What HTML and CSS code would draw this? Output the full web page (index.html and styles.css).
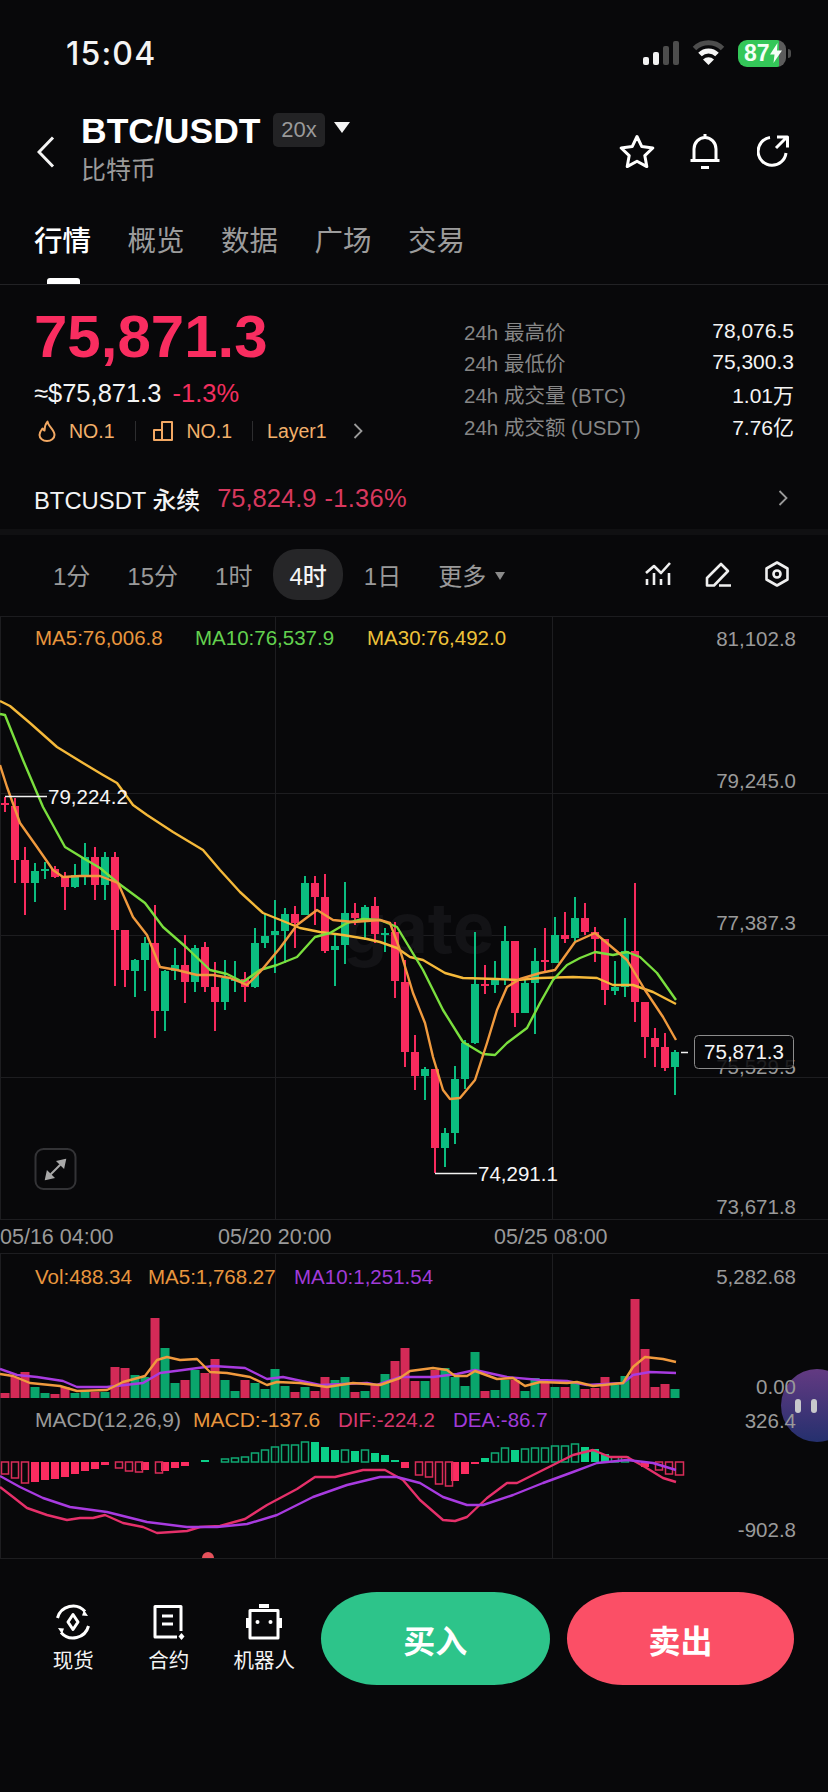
FILE: index.html
```html
<!DOCTYPE html>
<html lang="zh-CN">
<head>
<meta charset="utf-8">
<title>BTC/USDT</title>
<link rel="stylesheet" href="styles.css">
</head>
<body>
<main class="screen">
  <header class="status">
    <span class="clock">15:04</span>
    <div class="status-icons">
      <svg class="signal" width="37" height="24" viewBox="0 0 37 24"><rect class="on" x="0" y="16" width="6" height="8" rx="2"/><rect class="on" x="10" y="11" width="6" height="13" rx="2"/><rect class="off" x="20" y="5" width="6" height="19" rx="2"/><rect class="off" x="30" y="0" width="6" height="24" rx="2"/></svg>
      <svg class="wifi" width="33" height="26" viewBox="0 0 33 26"><path class="wifi-off" d="M2.5 8.500a20 20 0 0 1 28 0"/><path class="wifi-on" d="M8 14.500a12 12 0 0 1 17 0"/><path class="wifi-dot" d="M16.500 25l-5.500-5.500a8 8 0 0 1 11 0z"/></svg>
      <div class="battery"><span class="battery-level">87</span><svg class="bolt" width="12" height="20" viewBox="0 0 12 20"><path d="M7.500 0L0 11.500h4.500L3.500 20 12 7.500H7z"/></svg></div>
      <span class="battery-cap"></span>
    </div>
  </header>

  <section class="title-bar">
    <svg class="back" width="18" height="32" viewBox="0 0 18 32"><path d="M16 1.500L2 16l14 14.500"/></svg>
    <div class="title-main">
      <div class="title-line">
        <h1 class="pair">BTC/USDT</h1>
        <span class="leverage">20x</span>
        <span class="caret"></span>
      </div>
      <p class="coin-name">比特币</p>
    </div>
    <div class="title-actions">
      <svg width="36" height="34" viewBox="0 0 36 34"><path class="stroke-icon" d="M18 2.500l4.800 10.100 11 1.400-8 7.600 2 11-9.800-5.400-9.800 5.400 2-11-8-7.600 11-1.400z"/></svg>
      <svg width="32" height="37" viewBox="0 0 32 37"><path class="stroke-icon" d="M5 27.500V16a11 11.500 0 0 1 22 0v11.500M1.500 27.500h29M16 1v3.500M12 34.500h8"/></svg>
      <svg class="share-icon" width="32" height="32" viewBox="0 0 32 32"><path class="stroke-icon" d="M13 2.500A14 14 0 1 0 29 18M19 13L30 2M20 2h10.500v10.500"/></svg>
    </div>
  </section>

  <nav class="tabs">
    <a class="tab tab-active">行情</a>
    <a class="tab">概览</a>
    <a class="tab">数据</a>
    <a class="tab">广场</a>
    <a class="tab">交易</a>
  </nav>

  <section class="quote">
    <div class="quote-left">
      <div class="last-price">75,871.3</div>
      <div class="fiat-line"><span class="fiat">≈$75,871.3</span><span class="change">-1.3%</span></div>
      <div class="rank-line">
        <svg width="18" height="22" viewBox="0 0 18 22"><path class="rank-icon" d="M9.500 1.500C10 6.500 16.500 9.500 16.500 15a7.500 6 0 0 1-15 0c0-3 1.500-4.500 3-6.500.5 1 1 1.500 2 2C6.500 8 7.500 4 9.500 1.500z"/></svg>
        <span class="rank">NO.1</span>
        <span class="rank-sep"></span>
        <svg width="21" height="20" viewBox="0 0 21 20"><path class="rank-icon" d="M1 9h8v10H1zM9 19V1h10v18z"/></svg>
        <span class="rank">NO.1</span>
        <span class="rank-sep"></span>
        <span class="rank">Layer1</span>
        <svg class="rank-more" width="10" height="16" viewBox="0 0 10 16"><path d="M1.500 1l7 7-7 7"/></svg>
      </div>
    </div>
    <dl class="stats">
      <div class="stat"><dt>24h 最高价</dt><dd>78,076.5</dd></div>
      <div class="stat"><dt>24h 最低价</dt><dd>75,300.3</dd></div>
      <div class="stat"><dt>24h 成交量 (BTC)</dt><dd>1.01万</dd></div>
      <div class="stat"><dt>24h 成交额 (USDT)</dt><dd>7.76亿</dd></div>
    </dl>
  </section>

  <section class="perp">
    <span class="perp-name">BTCUSDT 永续</span>
    <span class="perp-price">75,824.9</span>
    <span class="perp-change">-1.36%</span>
    <svg class="perp-more" width="10" height="16" viewBox="0 0 10 16"><path d="M1.500 1l7 7-7 7"/></svg>
  </section>

  <section class="intervals">
    <span class="interval">1分</span>
    <span class="interval">15分</span>
    <span class="interval">1时</span>
    <span class="interval interval-active">4时</span>
    <span class="interval">1日</span>
    <span class="interval">更多<i class="more-caret"></i></span>
    <div class="chart-tools">
      <svg width="26" height="24" viewBox="0 0 26 24"><path class="tool-icon" d="M1 11l8-7 7 7 9-10M2 17v6M9 11v12M16 17v6M24 11v12"/></svg>
      <svg width="26" height="25" viewBox="0 0 26 25"><path class="tool-icon" d="M2 23.500V16L16 2l7 7-14 14.500zM14 23.500h12"/></svg>
      <svg width="24" height="26" viewBox="0 0 24 26"><path class="tool-icon" d="M12 1.500l10.500 6v11L12 24.500l-10.500-6v-11z"/><circle class="tool-icon" cx="12" cy="13" r="3.500"/></svg>
    </div>
  </section>

  <div class="float-widget"><span class="float-bar"></span><span class="float-bar"></span></div>

  <svg class="chart" width="828" height="942" viewBox="0 617 828 942">
    <path class="grid" d="M.5 617V1219M275.500 617V1219M552.500 617V1219M.5 1253V1558M275.500 1253V1558M552.500 1253V1558M0 793.500H828M0 935.500H828M0 1077.500H828M0 1219.500H828M0 1253.500H828M0 1558.500H828"/>
    <text class="watermark" x="343" y="953">gate</text>

    <text class="label ma5" x="35" y="645">MA5:76,006.8</text>
    <text class="label ma10" x="195" y="645">MA10:76,537.9</text>
    <text class="label ma30" x="367" y="645">MA30:76,492.0</text>

    <path class="wick green" d="M35 863V902M45 862V879M75 864V888M85 843V885M105 852V900M135 959V997M145 937V991M165 970V1031M175 948V980M195 945V992M225 960V1010M235 961V992M255 928V988M265 914V948M275 900V973M285 908V963M305 876V915M335 935V986M345 882V964M365 905V940M385 928V952M425 1067V1100M445 1128V1167M455 1066V1144M465 1040V1089M475 932V1044M495 961V993M505 926V985M525 980V1013M535 948V1034M555 917V963M575 897V943M615 961V995M625 918V997M675 1050V1095"/>
    <path class="wick red" d="M5 797V812M15 798V883M25 847V915M55 866V878M65 872V910M95 847V900M115 852V986M125 930V987M155 905V1038M185 935V1003M205 942V992M215 962V1031M245 972V1002M295 906V948M315 876V925M325 874V953M355 903V925M375 897V943M395 922V998M405 960V1067M415 1035V1090M435 1069V1173M485 965V994M515 941V1027M545 928V973M565 912V943M585 903V935M595 927V962M605 939V1005M635 883V1022M645 1002V1058M655 1028V1067M665 1033V1071"/>
    <path class="body green" d="M35 871V883M45 869V871M75 875V887M85 857V875M105 857V885M135 960V971M145 943V960M165 971V1011M175 965V971M195 948V982M225 978V1002M235 979V981M255 943V987M265 936V943M275 931V935M285 914V931M305 883V915M335 946V950M345 913V945M365 907V919M385 933V935M425 1069V1076M445 1133V1148M455 1079V1133M465 1043V1079M475 984V1043M495 980V985M505 941V980M525 983V1013M535 961V983M555 935V963M575 918V938M615 987V991M625 951V987M675 1052V1067"/>
    <path class="body red" d="M5 803V805M15 806V860M25 860V883M55 869V877M65 877V887M95 857V885M115 857V930M125 930V970M155 943V1011M185 965V982M205 947V987M215 987V1002M245 979V987M295 914V923M315 883V897M325 897V951M355 913V918M375 906V934M395 932V981M405 982V1052M415 1052V1076M435 1069V1148M485 984V986M515 941V1013M545 960V962M565 935V939M585 918V932M595 932V939M605 939V990M635 951V1002M645 1002V1037M655 1038V1047M665 1047V1068"/>

    <polyline class="line line-ma30" points="0,701 10,706 30,723 57,747 83,763 103,775 117,783 133,805 147,815 173,832 203,850 220,870 240,892 263,913 283,921 300,928 320,932 343,935 367,939 380,942 397,948 410,957 423,960 445,973 463,978 497,979 517,980 540,978 573,977 597,978 613,985 633,985 653,992 676,1004"/>
    <polyline class="line line-ma10" points="0,714 5,715 23,760 43,807 65,847 83,858 100,868 118,883 145,903 163,927 187,948 210,970 227,974 243,982 260,970 277,965 297,957 315,937 330,933 347,923 363,919 380,920 397,927 423,970 443,1010 463,1042 483,1054 495,1055 507,1043 527,1028 540,1003 553,980 567,965 580,958 595,952 613,955 627,952 640,957 657,973 676,1000"/>
    <polyline class="line line-ma5" points="0,765 7,787 20,823 37,847 53,870 63,877 80,876 100,876 118,883 133,917 147,935 160,967 177,970 197,975 213,975 230,978 247,985 260,972 280,948 297,925 317,910 333,920 353,922 380,920 390,923 400,950 413,993 425,1023 433,1057 443,1090 450,1099 460,1098 475,1080 487,1043 497,1010 507,987 520,979 540,973 555,970 575,942 595,933 607,943 627,960 645,990 663,1017 676,1040"/>

    <path class="marker" d="M5 796.500H47M435 1173.500H477M681 1052.500H688"/>
    <text class="label extreme" x="48" y="804">79,224.2</text>
    <text class="label extreme" x="478" y="1181">74,291.1</text>

    <text class="label axis axis-end" x="796" y="646">81,102.8</text>
    <text class="label axis axis-end" x="796" y="788">79,245.0</text>
    <text class="label axis axis-end" x="796" y="930">77,387.3</text>
    <text class="label axis axis-end" x="796" y="1074">75,529.5</text>
    <text class="label axis axis-end" x="796" y="1214">73,671.8</text>

    <rect class="price-box" x="694.500" y="1035.500" width="99" height="33" rx="4"/>
    <text class="label extreme axis-mid" x="744" y="1059">75,871.3</text>

    <rect class="expand-box" x="35.500" y="1149" width="40" height="40" rx="8"/>
    <path class="expand-arrow" d="M65 1160l-7 1.500 5.500 5.500zM46 1179l7-1.500-5.500-5.500zM60 1165l-9 9"/>

    <text class="label axis time" x="0" y="1244">05/16 04:00</text>
    <text class="label axis time" x="218" y="1244">05/20 20:00</text>
    <text class="label axis time" x="494" y="1244">05/25 08:00</text>

    <text class="label vol-ma5" x="35" y="1284">Vol:488.34</text>
    <text class="label vol-ma5" x="148" y="1284">MA5:1,768.27</text>
    <text class="label vol-ma10" x="294" y="1284">MA10:1,251.54</text>
    <text class="label axis axis-end" x="796" y="1284">5,282.68</text>

    <path class="vol vol-red" d="M5 1398V1393M15 1398V1377M25 1398V1372M55 1398V1394M65 1398V1387M95 1398V1392M115 1398V1367M125 1398V1368M155 1398V1318M185 1398V1380M205 1398V1373M215 1398V1359M245 1398V1380M295 1398V1392M315 1398V1391M325 1398V1377M355 1398V1392M375 1398V1385M395 1398V1361M405 1398V1348M415 1398V1381M435 1398V1370M485 1398V1391M515 1398V1380M545 1398V1383M565 1398V1387M585 1398V1389M595 1398V1388M605 1398V1377M635 1398V1299M645 1398V1349M655 1398V1387M665 1398V1384"/>
    <path class="vol vol-green" d="M35 1398V1387M45 1398V1393M75 1398V1393M85 1398V1390M105 1398V1392M135 1398V1375M145 1398V1377M165 1398V1348M175 1398V1383M195 1398V1370M225 1398V1380M235 1398V1391M255 1398V1383M265 1398V1389M275 1398V1369M285 1398V1386M305 1398V1387M335 1398V1380M345 1398V1377M365 1398V1391M385 1398V1374M425 1398V1381M445 1398V1368M455 1398V1377M465 1398V1386M475 1398V1352M495 1398V1390M505 1398V1380M525 1398V1391M535 1398V1378M555 1398V1387M575 1398V1383M615 1398V1385M625 1398V1376M675 1398V1389"/>
    <polyline class="line line-vol10" points="0,1369 17,1375 37,1377 63,1381 77,1387 107,1387 143,1383 160,1373 183,1370 213,1366 245,1368 267,1379 283,1377 320,1385 367,1383 377,1385 400,1377 433,1377 457,1374 475,1370 507,1377 540,1380 567,1381 587,1385 623,1383 633,1375 650,1372 676,1373"/>
    <polyline class="line line-vol5" points="0,1374 13,1376 30,1383 60,1386 77,1391 107,1390 123,1382 145,1376 157,1360 167,1357 180,1360 197,1359 210,1372 227,1373 250,1377 267,1385 277,1382 300,1383 327,1387 353,1383 380,1385 400,1378 410,1371 433,1368 447,1370 455,1376 467,1376 475,1371 497,1379 513,1378 525,1386 540,1382 567,1383 577,1382 593,1386 623,1383 633,1367 645,1357 663,1359 676,1362"/>

    <text class="label axis axis-end" x="796" y="1394">0.00</text>
    <text class="label axis macd-label" x="35" y="1427">MACD(12,26,9)</text>
    <text class="label vol-ma5 macd-label" x="193" y="1427">MACD:-137.6</text>
    <text class="label dif" x="338" y="1427">DIF:-224.2</text>
    <text class="label vol-ma10" x="453" y="1427">DEA:-86.7</text>
    <text class="label axis axis-end" x="796" y="1428">326.4</text>
    <text class="label axis axis-end" x="796" y="1537">-902.8</text>

    <path class="macd macd-red" d="M35 1462V1482M45 1462V1480M55 1462V1479M65 1462V1477M75 1462V1474M85 1462V1471M95 1462V1469M105 1462V1465M145 1462V1470M165 1462V1471M175 1462V1468M185 1462V1466M405 1462V1468M455 1462V1481M465 1462V1474M475 1462V1464M645 1462V1467"/>
    <path class="macd macd-green" d="M205 1462V1460M315 1462V1442M325 1462V1447M335 1462V1450M355 1462V1451M375 1462V1453M385 1462V1455M395 1462V1460M485 1462V1458M515 1462V1450M585 1462V1447M595 1462V1449M605 1462V1454"/>
    <path class="hollow hollow-red" d="M1.500 1462h7v12h-7zM11.500 1462h7v16h-7zM21.500 1462h7v21h-7zM115.500 1462h7v6h-7zM125.500 1462h7v9h-7zM135.500 1462h7v10h-7zM155.500 1462h7v11h-7zM415.500 1462h7v13h-7zM425.500 1462h7v15h-7zM435.500 1462h7v22h-7zM445.500 1462h7v24h-7zM655.500 1462h7v8h-7zM665.500 1462h7v12h-7zM675.500 1462h8v13h-8z"/>
    <path class="hollow hollow-green" d="M221.500 1462h7v-3h-7zM231.500 1462h7v-4h-7zM241.500 1462h7v-5h-7zM251.500 1462h7v-9h-7zM261.500 1462h7v-12h-7zM271.500 1462h7v-15h-7zM281.500 1462h7v-17h-7zM291.500 1462h7v-17h-7zM301.500 1462h7v-20h-7zM341.500 1462h7v-12h-7zM361.500 1462h7v-12h-7zM491.500 1462h7v-9h-7zM501.500 1462h7v-14h-7zM521.500 1462h7v-13h-7zM531.500 1462h7v-14h-7zM541.500 1462h7v-14h-7zM551.500 1462h7v-16h-7zM561.500 1462h7v-16h-7zM571.500 1462h7v-18h-7zM611.500 1462h7v-5h-7zM621.500 1462h7v-5h-7z"/>
    <polyline class="line line-dif" points="0,1487 13,1497 27,1508 47,1515 67,1520 80,1518 93,1518 105,1515 123,1523 143,1527 157,1533 187,1531 200,1527 220,1526 245,1519 267,1505 297,1489 315,1477 335,1477 363,1470 385,1470 403,1480 420,1500 443,1520 455,1521 467,1517 487,1498 507,1483 517,1483 543,1470 573,1455 593,1450 610,1457 627,1457 645,1467 663,1478 676,1482"/>
    <polyline class="line line-dea" points="0,1476 20,1487 43,1498 70,1507 107,1512 147,1522 187,1527 217,1527 247,1524 277,1515 313,1497 347,1485 380,1477 397,1477 420,1483 443,1497 467,1505 483,1505 513,1495 543,1483 573,1472 597,1463 627,1460 653,1463 676,1470"/>
    <path class="dot" d="M202 1558a6 6 0 0 1 12 0z"/>
  </svg>

  <footer class="trade-bar">
    <div class="tool">
      <svg width="36" height="36" viewBox="0 0 36 36"><path class="foot-icon" d="M2.500 14A16 16 0 0 1 30 7.500M33.500 22A16 16 0 0 1 6 28.500"/><path class="foot-icon" d="M18 10.500l5 7.500-5 7.500-5-7.500z"/><path class="foot-fill" d="M29 6l4 6-6-.5zM7 30l-4-6 6 .5z"/></svg>
      <span class="tool-label">现货</span>
    </div>
    <div class="tool">
      <svg width="32" height="36" viewBox="0 0 32 36"><path class="foot-icon" d="M28 27V2.500H2V33h22M9 12h11M9 20h11"/><path class="foot-fill" d="M28.500 29l3 3.500-3 3.500-3-3.500z"/></svg>
      <span class="tool-label">合约</span>
    </div>
    <div class="tool">
      <svg width="38" height="36" viewBox="0 0 38 36"><path class="foot-icon" d="M5 6.500h28v27.500H5z"/><path class="foot-fill" d="M14 0h10v4H14zM1 14h3v10H1zM34 14h3v10h-3z"/><circle class="foot-fill" cx="12.500" cy="18" r="2"/><circle class="foot-fill" cx="25.500" cy="18" r="2"/></svg>
      <span class="tool-label">机器人</span>
    </div>
    <button class="trade-btn buy">买入</button>
    <button class="trade-btn sell">卖出</button>
  </footer>
</main>
</body>
</html>
```

FILE: styles.css
```css
* { box-sizing: border-box; }
html, body { margin: 0; padding: 0; background: #08080a; }
body { font-family: "Liberation Sans", "Noto Sans CJK SC", sans-serif; color: #fff; }
h1, p, dl, dd { margin: 0; }

.screen { position: relative; width: 828px; height: 1792px; overflow: hidden; background: #08080a; }

/* status bar */
.status { height: 106px; display: flex; align-items: center; justify-content: space-between; padding: 0 37px 0 66px; }
.clock { font-family: Inter, "Liberation Sans", sans-serif; font-size: 32px; font-weight: 500; letter-spacing: 1.200px; color: #f4f4f4; }
.status-icons { display: flex; align-items: center; }
.signal .on { fill: #f2f2f2; }
.signal .off { fill: #4d4d4d; }
.wifi { margin-left: 12px; }
.wifi path { fill: none; stroke-width: 5; }
.wifi .wifi-off { stroke: #4d4d4d; }
.wifi .wifi-on { stroke: #f5f5f5; }
.wifi .wifi-dot { fill: #f5f5f5; stroke: none; }
.battery { margin-left: 13px; width: 48px; height: 27px; border-radius: 9px; display: flex; align-items: center; padding-left: 6px; background: linear-gradient(90deg, #34c759 0, #34c759 41px, #5c5c5c 41px); }
.battery-level { font-size: 23px; font-weight: 700; line-height: 1; color: #f4fff6; }
.bolt { fill: #f4fff6; }
.battery-cap { width: 3px; height: 9px; margin-left: 2px; border-radius: 0 3px 3px 0; background: #4d4d4d; }

/* title */
.title-bar { height: 112px; display: flex; padding-left: 37px; padding-right: 39px; }
.back { margin-top: 30px; }
.back path { fill: none; stroke: #f4f4f4; stroke-width: 3; }
.title-main { margin-left: 26px; padding-top: 7px; }
.title-line { display: flex; align-items: center; height: 34px; }
.pair { font-size: 35.500px; font-weight: 700; line-height: 34px; padding-top: 2px; }
.leverage { margin-left: 12.500px; width: 52px; height: 34px; display: flex; align-items: center; justify-content: center; border-radius: 5px; background: #232325; color: #9a9a9a; font-size: 22px; }
.caret { margin-left: 9px; margin-bottom: 5px; border-left: 8px solid transparent; border-right: 8px solid transparent; border-top: 11px solid #f4f4f4; }
.coin-name { margin-top: 9px; font-size: 25px; line-height: 28px; color: #9a9a9a; }
.title-actions { margin-left: auto; display: flex; align-items: center; gap: 33.500px; height: 72px; margin-top: 9px; }
.share-icon { margin-left: 3px; }
.stroke-icon { fill: none; stroke: #fff; stroke-width: 3; stroke-linejoin: round; }

/* tabs */
.tabs { height: 67px; display: flex; gap: 36.500px; padding-left: 34px; border-bottom: 1px solid #222225; }
.tab { position: relative; font-size: 28.500px; line-height: 40px; padding-top: 3px; height: 66px; color: #9c9c9c; }
.tab-active { color: #fff; font-weight: 500; }
.tab-active::after { content: ""; position: absolute; left: 13px; bottom: 0; width: 33px; height: 6px; border-radius: 3px 3px 0 0; background: #fff; }

/* quote */
.quote { height: 184px; display: flex; justify-content: space-between; padding: 30px 34px 0; }
.last-price { font-size: 60px; font-weight: 700; line-height: 44px; color: #f92d60; }
.fiat-line { display: flex; gap: 11px; margin-top: 21px; font-size: 25.500px; line-height: 26px; }
.fiat { color: #f4f4f4; }
.change { color: #f22f5f; }
.rank-line { display: flex; align-items: center; margin-top: 13px; height: 24px; padding-left: 4px; }
.rank { font-size: 19.500px; color: #f2b06b; }
.rank-icon { fill: none; stroke: #f2a863; stroke-width: 2; stroke-linejoin: round; }
.rank-line svg + .rank { margin-left: 13px; }
.rank-sep { width: 1px; height: 20px; margin-left: 20px; background: #2d2d2f; }
.rank-sep + svg { margin-left: 17px; }
.rank-sep + .rank { margin-left: 14px; }
.rank-more { margin-left: 26px; }
.rank-more path, .perp-more path { fill: none; stroke: #9a9a9a; stroke-width: 1.800px; }
.stats { width: 330px; }
.stat { height: 31.600px; display: flex; align-items: center; justify-content: space-between; font-size: 21px; }
.stat dt { color: #868686; font-size: 20.500px; }
.stat dd { color: #f4f4f4; }

/* perpetual */
.perp { height: 66px; display: flex; align-items: center; padding: 0 40px 2px 34px; font-size: 25.500px; border-bottom: 6px solid #101012; }
.perp-name { color: #f4f4f4; font-weight: 500; font-size: 23.800px; }
.perp-price { margin-left: 17px; color: #d8385e; }
.perp-change { margin-left: 8px; color: #d8385e; letter-spacing: .3px; }
.perp-more { margin-left: auto; }

/* intervals */
.intervals { height: 82px; display: flex; align-items: center; gap: 5px; padding: 0 39px 3px 37px; border-bottom: 1px solid #1c1c1f; }
.interval { height: 51px; display: flex; align-items: center; padding: 0 16px; border-radius: 24px; font-size: 24px; color: #9a9a9a; }
.interval-active { background: #262628; color: #f4f4f4; font-weight: 500; }
.more-caret { margin-left: 9px; margin-top: 3px; border-left: 5.500px solid transparent; border-right: 5.500px solid transparent; border-top: 8px solid #8a8a8a; }
.chart-tools { margin-left: auto; display: flex; align-items: center; gap: 34px; }
.tool-icon { fill: none; stroke: #efefef; stroke-width: 2.600; stroke-linejoin: round; }

/* chart */
.chart { position: relative; display: block; }
.grid { fill: none; stroke: #1d1d20; stroke-width: 1; }
.watermark { font-family: Inter, "Liberation Sans", sans-serif; font-size: 70px; font-weight: 700; fill: #131316; }
.label { font-family: "Liberation Sans", sans-serif; font-size: 20.500px; }
.time { font-size: 21.500px; }
.macd-label { font-size: 21px; }
.axis { fill: #9a9a9a; }
.axis-end { text-anchor: end; }
.axis-mid { text-anchor: middle; }
.extreme { fill: #f6f6f6; }
.ma5 { fill: #e8963e; }
.ma10 { fill: #63d14f; }
.ma30 { fill: #eec23a; }
.vol-ma5 { fill: #e8963e; }
.vol-ma10 { fill: #a03bd8; }
.dif { fill: #d8386e; }
.wick { fill: none; stroke-width: 2; }
.body { fill: none; stroke-width: 8; }
.green { stroke: #0bbd80; }
.red { stroke: #f72b5e; }
.line { fill: none; stroke-width: 2.400; stroke-linejoin: round; }
.line-ma5 { stroke: #f09a3e; }
.line-ma10 { stroke: #7adf3e; }
.line-ma30 { stroke: #f5b93a; }
.line-vol5 { stroke: #f09a3e; }
.line-vol10 { stroke: #a83be0; }
.line-dif { stroke: #e6306a; }
.line-dea { stroke: #a83be0; }
.marker { fill: none; stroke: #f2f2f2; stroke-width: 1.500; }
.price-box { fill: rgba(8, 8, 10, .85); stroke: #8c8c8c; stroke-width: 1; }
.expand-box { fill: none; stroke: #333336; stroke-width: 2; }
.expand-arrow { fill: #a8a8a8; stroke: #a8a8a8; stroke-width: 2; }
.vol { fill: none; stroke-width: 9; }
.vol-red { stroke: #d32a57; }
.vol-green { stroke: #0aa56c; }
.macd { fill: none; stroke-width: 8; }
.macd-red { stroke: #fb2c60; }
.macd-green { stroke: #0bd088; }
.hollow { fill: none; stroke-width: 1.500; }
.hollow-red { stroke: #d92c59; }
.hollow-green { stroke: #0fa873; }
.dot { fill: #e5525c; }

/* floating pause widget */
.float-widget { position: absolute; left: 781px; top: 1369px; width: 72px; height: 73px; display: flex; align-items: center; gap: 10px; padding-left: 14px; border-radius: 50%; background: linear-gradient(180deg, #633a82, #25306e); }
.float-bar { width: 6px; height: 14px; border-radius: 3px; background: #c8c8cc; }

/* trade bar */
.trade-bar { display: flex; align-items: flex-start; padding: 33px 0 0 25.500px; }
.tool { width: 95.500px; display: flex; flex-direction: column; align-items: center; }
.tool svg { height: 36px; margin-top: 12px; }
.tool-label { margin-top: 7px; font-size: 20.500px; line-height: 28px; color: #f4f4f4; }
.foot-icon { fill: none; stroke: #fff; stroke-width: 3; stroke-linejoin: round; }
.foot-fill { fill: #fff; }
.trade-btn { height: 93px; border: 0; border-radius: 56px / 46.500px; font-family: inherit; font-size: 32px; font-weight: 700; color: #fff; padding: 0; }
.buy { width: 228.500px; margin-left: 9px; background: #2dc48a; }
.sell { width: 227px; margin-left: 17.500px; background: #fb4f66; }
```
